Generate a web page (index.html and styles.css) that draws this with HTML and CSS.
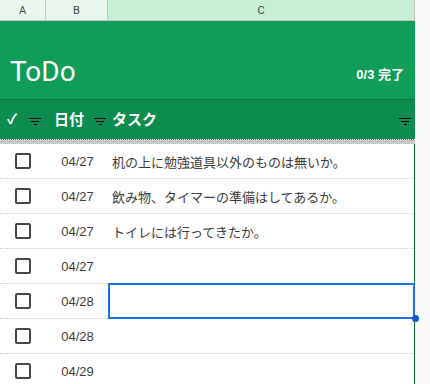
FILE: index.html
```html
<!DOCTYPE html>
<html lang="ja">

<head>
    <meta charset="UTF-8">
    <meta name="viewport" content="width=device-width, initial-scale=1.0">
    <title>ToDo</title>
    <link rel="stylesheet" href="styles.css">
</head>

<body>
    <div class="sheet">
        <div class="col-heads">
            <div class="col-head">A</div>
            <div class="col-head">B</div>
            <div class="col-head selected">C</div>
        </div>

        <div class="title-band">
            <span class="title">ToDo</span>
            <span class="count">0/3 完了</span>
        </div>

        <div class="head-row">
            <div class="head-cell first">
                <span class="head-label check">✓</span>
                <span class="filter"><i></i><i></i><i></i></span>
            </div>
            <div class="head-cell">
                <span class="head-label">日付</span>
                <span class="filter"><i></i><i></i><i></i></span>
            </div>
            <div class="head-cell wide">
                <span class="head-label">タスク</span>
                <span class="filter"><i></i><i></i><i></i></span>
            </div>
        </div>
        <div class="freeze"></div>

        <div class="rows">
            <div class="row">
                <div class="cell"><span class="box"></span></div>
                <div class="cell date">04/27</div>
                <div class="cell task">机の上に勉強道具以外のものは無いか。</div>
            </div>
            <div class="row">
                <div class="cell"><span class="box"></span></div>
                <div class="cell date">04/27</div>
                <div class="cell task">飲み物、タイマーの準備はしてあるか。</div>
            </div>
            <div class="row">
                <div class="cell"><span class="box"></span></div>
                <div class="cell date">04/27</div>
                <div class="cell task">トイレには行ってきたか。</div>
            </div>
            <div class="row">
                <div class="cell"><span class="box"></span></div>
                <div class="cell date">04/27</div>
                <div class="cell task"></div>
            </div>
            <div class="row">
                <div class="cell"><span class="box"></span></div>
                <div class="cell date">04/28</div>
                <div class="cell task active"></div>
            </div>
            <div class="row">
                <div class="cell"><span class="box"></span></div>
                <div class="cell date">04/28</div>
                <div class="cell task"></div>
            </div>
            <div class="row">
                <div class="cell"><span class="box"></span></div>
                <div class="cell date">04/29</div>
                <div class="cell task"></div>
            </div>
        </div>
    </div>
</body>

</html>
```

FILE: styles.css
```css
body {
    margin: 0;
    height: 384px;
    overflow: hidden;
    background-color: #f8f9fa;
    font-family: "Liberation Sans", "Noto Sans CJK JP", sans-serif;
}

.sheet {
    width: 415px;
    background-color: #ffffff;
    min-height: 384px;
}

.col-heads {
    display: grid;
    grid-template-columns: 46px 62px 1fr;
    height: 21px;
    box-sizing: border-box;
    border-bottom: 1px solid #c4c7c5;
}

.col-head {
    display: flex;
    align-items: center;
    justify-content: center;
    font-family: Roboto, "Liberation Sans", sans-serif;
    font-size: 11px;
    color: #444746;
    background-color: #e9f7ee;
    border-right: 1px solid #c4c7c5;
}

.col-head.selected {
    background-color: #c6efd4;
}

.title-band {
    height: 78px;
    box-sizing: border-box;
    background-color: #0f9d58;
    display: flex;
    align-items: flex-end;
    justify-content: space-between;
    padding: 0 10px 11px 10px;
    color: #ffffff;
}

.title {
    font-family: Roboto, "Liberation Sans", sans-serif;
    font-size: 28px;
    line-height: 32px;
}

.count {
    font-size: 13px;
    font-weight: bold;
    margin-bottom: 5px;
    margin-right: 1px;
}

.head-row {
    display: grid;
    grid-template-columns: 46px 62px 1fr;
    height: 41px;
    box-sizing: border-box;
    background-color: #0d8c50;
    border-top: 1px solid #0b7a45;
    border-bottom: 1px dotted #ffffff;
}

.head-cell {
    display: flex;
    align-items: center;
    padding: 0 4px 3px 8px;
    gap: 10px;
    white-space: nowrap;
}

.head-cell.first {
    padding-left: 7px;
    gap: 12px;
}

.head-cell.wide {
    justify-content: space-between;
    padding-left: 4px;
}

.head-label {
    color: #ffffff;
    font-size: 15px;
    line-height: 1;
    font-weight: bold;
    font-family: "Noto Sans CJK JP", sans-serif;
}

.head-label.check {
    font-size: 14px;
}

.filter {
    display: flex;
    flex-direction: column;
    align-items: center;
    gap: 2px;
    width: 12px;
    flex-shrink: 0;
    margin-top: 6px;
}

.filter i {
    display: block;
    height: 1px;
    background-color: #000000;
}

.filter i:nth-child(1) { width: 12px; }
.filter i:nth-child(2) { width: 8px; }
.filter i:nth-child(3) { width: 3px; }

.freeze {
    height: 4px;
    background-color: #c8c8c8;
}

.rows {
    border-right: 1px solid #137333;
}

.row {
    display: grid;
    grid-template-columns: 46px 62px 1fr;
    height: 35px;
    box-sizing: border-box;
    border-bottom: 1px dotted #cccccc;
}

.cell {
    display: flex;
    align-items: center;
    justify-content: center;
    font-size: 13px;
    color: #3c3c3c;
}

.box {
    width: 12px;
    height: 12px;
    border: 2px solid #474747;
    border-radius: 2px;
}

.date {
    font-family: "Liberation Sans", Arial, sans-serif;
    padding-left: 1px;
}

.task {
    justify-content: flex-start;
    padding-left: 4px;
    font-family: "Noto Sans CJK JP", sans-serif;
    position: relative;
}

.task.active::after {
    content: "";
    position: absolute;
    top: -1px;
    left: 0;
    right: -1px;
    bottom: -1px;
    border: 2px solid #1a73e8;
}

.task.active::before {
    content: "";
    position: absolute;
    right: -5px;
    bottom: -4px;
    width: 7px;
    height: 7px;
    border-radius: 50%;
    background-color: #1155cc;
    z-index: 1;
}
```
